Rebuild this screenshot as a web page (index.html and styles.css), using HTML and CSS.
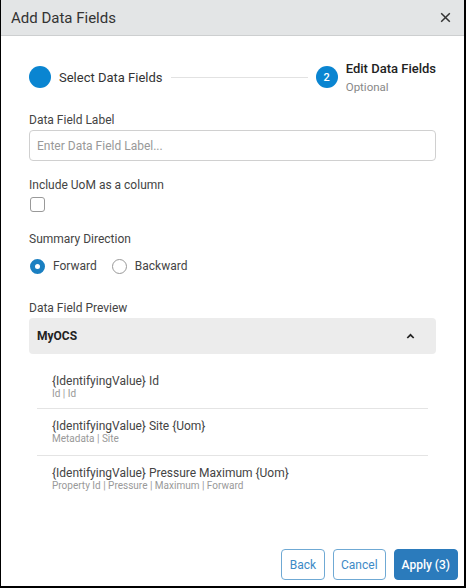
FILE: index.html
```html
<!DOCTYPE html>
<html>
<head>
<meta charset="utf-8">
<link rel="stylesheet" href="styles.css">
</head>
<body>
<div class="dialog">
  <div class="header">
    <span class="title">Add Data Fields</span>
    <svg class="close" width="11" height="11" viewBox="0 0 11 11"><path d="M1.2 1.2 L9.8 9.8 M9.8 1.2 L1.2 9.8" stroke="#333" stroke-width="1.5" fill="none"/></svg>
  </div>
  <div class="body">
    <div class="stepper">
      <div class="step">
        <span class="circle"></span>
        <span class="step-label">Select Data Fields</span>
      </div>
      <div class="step-line"></div>
      <div class="step step2">
        <span class="circle">2</span>
        <div class="step-text">
          <span class="step-label strong">Edit Data Fields</span>
          <span class="step-sub">Optional</span>
        </div>
      </div>
    </div>

    <div class="label">Data Field Label</div>
    <div class="input">Enter Data Field Label...</div>

    <div class="label uom-label">Include UoM as a column</div>
    <div class="checkbox"></div>

    <div class="label dir-label">Summary Direction</div>
    <div class="radios">
      <div class="radio-opt"><span class="radio checked"></span><span>Forward</span></div>
      <div class="radio-opt"><span class="radio"></span><span>Backward</span></div>
    </div>

    <div class="label prev-label">Data Field Preview</div>
    <div class="acc-head">
      <span class="acc-title">MyOCS</span>
      <svg width="9" height="6" viewBox="0 0 9 6"><path d="M1.3 5 L4.5 1.8 L7.7 5" stroke="#222" stroke-width="1.7" fill="none"/></svg>
    </div>
    <div class="items">
      <div class="item">
        <div class="item-title">{IdentifyingValue} Id</div>
        <div class="item-sub">Id | Id</div>
      </div>
      <div class="item">
        <div class="item-title">{IdentifyingValue} Site {Uom}</div>
        <div class="item-sub">Metadata | Site</div>
      </div>
      <div class="item last">
        <div class="item-title">{IdentifyingValue} Pressure Maximum {Uom}</div>
        <div class="item-sub">Property Id | Pressure | Maximum | Forward</div>
      </div>
    </div>
  </div>
  <div class="footer">
    <button class="btn outline back">Back</button>
    <button class="btn outline">Cancel</button>
    <button class="btn primary">Apply (3)</button>
  </div>
</div>
</body>
</html>
```
FILE: styles.css
```css
* { box-sizing: border-box; }
html, body { margin: 0; padding: 0; }
body {
  width: 466px;
  height: 588px;
  font-family: Roboto, "Liberation Sans", sans-serif;
  background: #fff;
  color: #444;
}
.dialog {
  width: 466px;
  height: 588px;
  border-left: 1px solid #000;
  border-right: 2px solid #000;
  border-bottom: 2px solid #000;
  display: flex;
  flex-direction: column;
}
.header {
  height: 36px;
  flex-shrink: 0;
  background: #e3e5e6;
  border-bottom: 1px solid #cdcfd0;
  display: flex;
  align-items: center;
  justify-content: space-between;
  padding: 0 13px 0 10px;
}
.title {
  font-size: 15px;
  color: #333;
}
.close { display: block; }
.body {
  flex: 1;
  padding: 26px 28px 0 28px;
}
.stepper {
  display: flex;
  align-items: center;
  height: 30px;
  margin-bottom: 20px;
}
.step {
  display: flex;
  align-items: center;
}
.circle {
  width: 22px;
  height: 22px;
  border-radius: 50%;
  background: #0a85d1;
  color: #fff;
  font-size: 11px;
  font-weight: 500;
  display: flex;
  align-items: center;
  justify-content: center;
  flex-shrink: 0;
}
.step-label {
  font-size: 13px;
  color: #333;
  margin-left: 8px;
}
.step-line {
  flex: 1;
  height: 1px;
  background: #e2e2e2;
  margin: 0 8px;
}
.step-text {
  display: flex;
  flex-direction: column;
  margin-left: 8px;
  padding-top: 3px;
}
.step-text .step-label {
  margin-left: 0;
  color: #222;
  font-weight: 500;
  line-height: 16px;
}
.step-sub {
  font-size: 11.5px;
  color: #888;
  line-height: 20px;
}
.label {
  font-size: 12px;
  color: #444;
  line-height: 16px;
}
.input {
  margin-top: 2px;
  height: 31px;
  border: 1px solid #d0d0d0;
  border-radius: 4px;
  padding: 0 7px;
  display: flex;
  align-items: center;
  font-size: 12px;
  color: #999;
}
.uom-label { margin-top: 16px; }
.checkbox {
  width: 15px;
  height: 15px;
  border: 1px solid #999;
  border-radius: 3px;
  margin-top: 4px;
  margin-left: 1px;
}
.dir-label { margin-top: 19px; }
.radios {
  display: flex;
  gap: 14px;
  margin-top: 11px;
}
.radio-opt {
  display: flex;
  align-items: center;
  gap: 8px;
  font-size: 12px;
  color: #444;
  line-height: 16px;
}
.radio {
  width: 15px;
  height: 15px;
  border-radius: 50%;
  border: 1px solid #999;
  margin-left: 1px;
}
.radio.checked {
  border: 5px solid #1a7fc1;
  background: #fff;
}
.prev-label { margin-top: 26px; }
.acc-head {
  margin-top: 2px;
  height: 36px;
  background: #ececec;
  border-radius: 4px;
  display: flex;
  align-items: center;
  justify-content: space-between;
  padding: 0 21px 0 8px;
}
.acc-title {
  font-size: 12px;
  font-weight: 700;
  color: #222;
}
.items {
  padding: 10px 8px 0 8px;
}
.item {
  border-bottom: 1px solid #e4e4e4;
  padding: 10px 15px 10px 15px;
  height: 47px;
}
.item:first-child { height: 45px; padding-top: 10px; }
.item.last { border-bottom: none; }
.item-title {
  font-size: 12px;
  color: #444;
  line-height: 14px;
}
.item-sub {
  font-size: 10px;
  color: #999;
  line-height: 12px;
}
.footer {
  display: flex;
  justify-content: flex-end;
  gap: 8px;
  padding: 0 6px 6px 0;
}
.btn {
  height: 31px;
  font-family: Roboto, "Liberation Sans", sans-serif;
  font-size: 12px;
  border-radius: 4px;
  padding: 0 7px;
  cursor: pointer;
}
.btn.back { padding: 0 8px; }
.btn.outline {
  background: #fff;
  border: 1px solid #6fa9d4;
  color: #3d8ac6;
}
.btn.primary {
  background: #2b7bbc;
  border: 1px solid #2b7bbc;
  color: #fff;
  font-weight: 500;
  padding: 0 7px;
}
```
